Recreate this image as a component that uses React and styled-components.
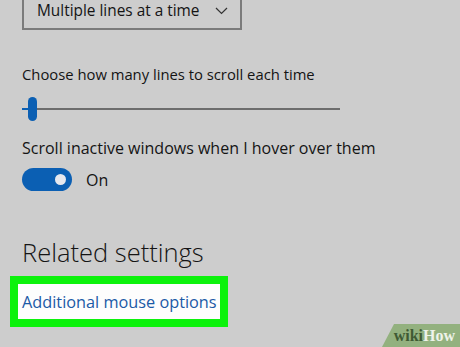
import React from "react";
import styled, { createGlobalStyle } from "styled-components";

const Global = createGlobalStyle`
  html, body { margin: 0; padding: 0; }
  body {
    width: 460px; height: 347px; overflow: hidden;
    background: #cdcdcd;
    font-family: "Open Sans", "Noto Sans", sans-serif;
    color: #111;
  }
`;

const Page = styled.div`
  position: relative;
  width: 460px;
  height: 347px;
  overflow: hidden;
  background: #cdcdcd;
  display: flex;
  flex-direction: column;
`;

const Content = styled.div`
  padding-left: 22px;
  display: flex;
  flex-direction: column;
`;

const Dropdown = styled.div`
  margin-top: -12px;
  width: 220px;
  height: 42px;
  border: 2px solid #7b7b7b;
  box-sizing: border-box;
  display: flex;
  align-items: flex-end;
  justify-content: space-between;
  padding: 0 12px 7px 13px;
  font-size: 15.4px;
  color: #141414;
  white-space: nowrap;
`;

const Label = styled.div`
  font-size: ${p => p.$size}px;
  color: #141414;
  margin-top: ${p => p.$mt}px;
  line-height: 20px;
  white-space: nowrap;
`;

const Slider = styled.div`
  position: relative;
  margin-top: 13px;
  width: 318px;
  height: 24px;
  display: flex;
  align-items: center;
`;

const Track = styled.div`
  flex: 1;
  height: 2px;
  background: #6d6d6d;
`;

const TrackFill = styled.div`
  width: 6px;
  height: 2px;
  background: #0b5fb3;
`;

const Thumb = styled.div`
  position: absolute;
  left: 6px;
  top: 0;
  width: 9px;
  height: 24px;
  border-radius: 5px;
  background: #0b5fb3;
`;

const ToggleRow = styled.div`
  margin-top: 10px;
  display: flex;
  align-items: center;
  gap: 14px;
  font-size: 16px;
  color: #141414;
`;

const Toggle = styled.div`
  width: 50px;
  height: 23px;
  border-radius: 12px;
  background: #0b5fb3;
  display: flex;
  align-items: center;
  justify-content: flex-end;
  padding-right: 6px;
  box-sizing: border-box;
`;

const Knob = styled.div`
  width: 11px;
  height: 11px;
  border-radius: 50%;
  background: #e6e8ee;
`;

const Heading = styled.div`
  margin-top: 46px;
  font-size: 25.5px;
  font-weight: 300;
  color: #141414;
  line-height: 30px;
`;

const Highlight = styled.div`
  margin-top: 9px;
  margin-left: -12px;
  width: 218px;
  height: 51px;
  box-sizing: border-box;
  border: 8px solid #0cf20c;
  background: #fdfdfd;
  display: flex;
  align-items: center;
  padding-left: 4px;
`;

const Link = styled.a`
  font-size: 16.3px;
  color: #1b5aa6;
  text-decoration: none;
  white-space: nowrap;
`;

const Watermark = styled.div`
  position: absolute;
  right: 0;
  bottom: 0;
  width: 78px;
  height: 23px;
  background: #93b17f;
  clip-path: polygon(12px 0, 100% 0, 100% 100%, 0 100%);
  display: flex;
  align-items: center;
  justify-content: flex-end;
  padding-right: 5px;
  box-sizing: border-box;
  font-family: "Liberation Serif", "DejaVu Serif", serif;
  font-weight: bold;
  font-size: 16px;
`;

const Wiki = styled.span` color: #3f5a33; `;
const How = styled.span` color: #eef3ea; `;

export default function App() {
  return (
    <Page>
      <Global />
      <Content>
        <Dropdown>
          <span>Multiple lines at a time</span>
          <svg width="13" height="8" viewBox="0 0 13 8" style={{ marginBottom: 6 }}>
            <path d="M1 1 L6.5 6.5 L12 1" fill="none" stroke="#333" strokeWidth="1.2" />
          </svg>
        </Dropdown>
        <Label $mt={34} $size={14.8}>Choose how many lines to scroll each time</Label>
        <Slider>
          <TrackFill />
          <Track />
          <Thumb />
        </Slider>
        <Label $mt={17} $size={16}>Scroll inactive windows when I hover over them</Label>
        <ToggleRow>
          <Toggle><Knob /></Toggle>
          <span>On</span>
        </ToggleRow>
        <Heading>Related settings</Heading>
        <Highlight>
          <Link href="#">Additional mouse options</Link>
        </Highlight>
      </Content>
      <Watermark><Wiki>wiki</Wiki><How>How</How></Watermark>
    </Page>
  );
}
